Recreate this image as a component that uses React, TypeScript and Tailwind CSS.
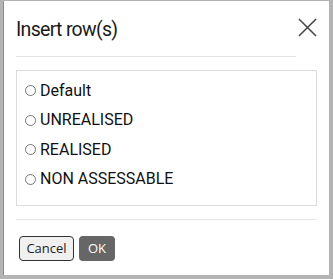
import { useState } from "react";

const options = ["Default", "UNREALISED", "REALISED", "NON ASSESSABLE"];

export default function App() {
    const [selected, setSelected] = useState<string | null>(null);

    return (
        <div className="w-[333px] h-[279px] bg-[#b4b4b4] pl-[3px] pt-[1px] pr-[4px] pb-[4px]" style={{ fontFamily: "'Open Sans', 'Noto Sans', sans-serif" }}>
            <div className="w-full h-full bg-white border-l border-[#8c8c8c] flex flex-col">
                <div className="flex items-start justify-between pl-[12px] pr-[12px] pt-[16px]">
                    <h1 className="text-[19.5px] leading-[26px] tracking-[-0.7px] text-[#1a1a1a] font-[Roboto,sans-serif]">Insert row(s)</h1>
                    <button className="mt-[1px] text-[#444]">
                        <svg width="19" height="19" viewBox="0 0 20 20" fill="none" stroke="currentColor" strokeWidth="1.6">
                            <path d="M1 1L19 19M19 1L1 19" />
                        </svg>
                    </button>
                </div>
                <div className="ml-[12px] mt-[13px] mr-[33px] border-t border-[#e2e2e2]" />
                <div className="mx-[12px] mt-[13px] border border-[#dcdcdc] h-[136px] pl-[8px] pt-[10px] flex flex-col gap-[10.5px]">
                    {options.map((option) => (
                        <label key={option} className="flex items-center gap-[4px] h-[19px] text-[16px] text-[#111] font-[Roboto,sans-serif] cursor-pointer">
                            <span
                                className="w-[11px] h-[11px] rounded-full border border-[#777] flex items-center justify-center"
                                onClick={() => setSelected(option)}
                            >
                                {selected === option && <span className="w-[5px] h-[5px] rounded-full bg-[#333]" />}
                            </span>
                            <span>{option}</span>
                        </label>
                    ))}
                </div>
                <div className="mx-[12px] mt-[13px] border-t border-[#e6e6e6]" />
                <div className="flex gap-[5px] pl-[15px] mt-[16px]">
                    <button className="h-[25px] w-[55px] rounded-[4px] border border-[#333] bg-[#f0f0f0] text-[13px] text-[#222]">
                        Cancel
                    </button>
                    <button className="h-[25px] w-[36px] rounded-[4px] bg-[#666] text-[13px] text-white">
                        OK
                    </button>
                </div>
            </div>
        </div>
    );
}
